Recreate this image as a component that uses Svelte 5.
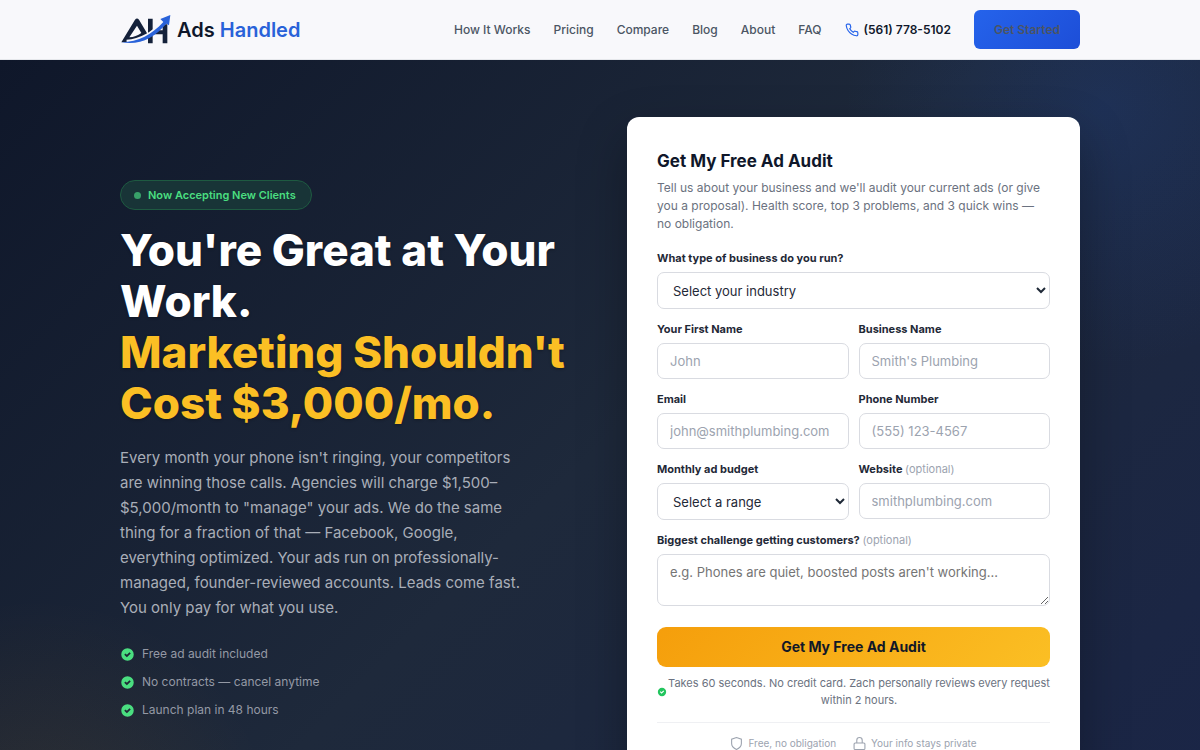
<script lang="ts">
  const links = ['How It Works', 'Pricing', 'Compare', 'Blog', 'About', 'FAQ'];
  const perks = ['Free ad audit included', 'No contracts — cancel anytime', 'Launch plan in 48 hours'];
  const industries = ['Plumbing', 'HVAC', 'Roofing', 'Electrical', 'Landscaping', 'Other'];
  const budgets = ['Under $500', '$500–$1,000', '$1,000–$3,000', '$3,000+'];

  let form = $state({ industry: '', name: '', business: '', email: '', phone: '', budget: '', website: '', challenge: '' });

  function submit(e: SubmitEvent) {
    e.preventDefault();
  }
</script>

{#snippet check(size: number)}
  <svg width={size} height={size} viewBox="0 0 24 24" aria-hidden="true">
    <path fill="currentColor" fill-rule="evenodd" d="M12 2a10 10 0 1 0 0 20 10 10 0 0 0 0-20Zm5.2 8.2-6.2 6.2-4.2-4.2 2-2 2.2 2.2 4.2-4.2 2 2Z" />
  </svg>
{/snippet}

<header>
  <div class="container bar">
    <a class="logo" href="/">
      <svg width="51" height="30" viewBox="30 44 153 90" aria-hidden="true">
        <path fill="#14213a" fill-rule="evenodd" d="M34 126 75 58q6-7 12 0l25 42-16 12-34 12Zm24-15q20-1 36-13L81 76Z" />
        <path fill="#14213a" d="M114 55h14v74h-14ZM158 72h14v57h-14v-27h-30V90h30Z" />
        <path fill="none" stroke="#f8f8fb" stroke-width="14" d="M50 125C94 122 130 101 162 65" />
        <path fill="#2962d9" d="M34 126c52-1 92-24 126-61l-9-9 30-12-4 31-8-5c-38 43-79 66-135 56Z" />
      </svg>
      <span>Ads <b>Handled</b></span>
    </a>
    <nav>
      {#each links as link}
        <a href="#{link.toLowerCase().replaceAll(' ', '-')}">{link}</a>
      {/each}
      <a class="tel" href="tel:5617785102">
        <svg width="14" height="14" viewBox="0 0 24 24" fill="none" stroke="#2563eb" stroke-width="2" stroke-linecap="round" stroke-linejoin="round" aria-hidden="true">
          <path d="M22 16.92v3a2 2 0 0 1-2.18 2 19.8 19.8 0 0 1-8.63-3.07 19.5 19.5 0 0 1-6-6A19.8 19.8 0 0 1 2.12 4.18 2 2 0 0 1 4.11 2h3a2 2 0 0 1 2 1.72c.13.96.36 1.9.7 2.81a2 2 0 0 1-.45 2.11L8.09 9.91a16 16 0 0 0 6 6l1.27-1.27a2 2 0 0 1 2.11-.45c.91.34 1.85.57 2.81.7A2 2 0 0 1 22 16.92Z" />
        </svg>
        (561) 778-5102
      </a>
      <a class="cta" href="#audit">Get Started</a>
    </nav>
  </div>
</header>

<main class="hero">
  <div class="container grid">
    <section class="pitch">
      <p class="badge"><i></i>Now Accepting New Clients</p>
      <h1>You're Great at Your Work.<br /><em>Marketing Shouldn't Cost $3,000/mo.</em></h1>
      <p class="lead">
        Every month your phone isn't ringing, your competitors are winning those calls. Agencies will charge
        $1,500–$5,000/month to "manage" your ads. We do the same thing for a fraction of that — Facebook, Google,
        everything optimized. Your ads run on professionally-managed, founder-reviewed accounts. Leads come fast.
        You only pay for what you use.
      </p>
      <ul>
        {#each perks as perk}
          <li>{@render check(15)}{perk}</li>
        {/each}
      </ul>
    </section>

    <form id="audit" class="card" onsubmit={submit}>
      <h2>Get My Free Ad Audit</h2>
      <p class="intro">
        Tell us about your business and we'll audit your current ads (or give you a proposal). Health score, top 3
        problems, and 3 quick wins — no obligation.
      </p>

      <div class="fields">
        <div class="field wide">
          <label for="industry">What type of business do you run?</label>
          <select id="industry" bind:value={form.industry}>
            <option value="">Select your industry</option>
            {#each industries as item}<option>{item}</option>{/each}
          </select>
        </div>
        <div class="field">
          <label for="name">Your First Name</label>
          <input id="name" placeholder="John" bind:value={form.name} />
        </div>
        <div class="field">
          <label for="business">Business Name</label>
          <input id="business" placeholder="Smith's Plumbing" bind:value={form.business} />
        </div>
        <div class="field">
          <label for="email">Email</label>
          <input id="email" type="email" placeholder="john@smithplumbing.com" bind:value={form.email} />
        </div>
        <div class="field">
          <label for="phone">Phone Number</label>
          <input id="phone" type="tel" placeholder="(555) 123-4567" bind:value={form.phone} />
        </div>
        <div class="field">
          <label for="budget">Monthly ad budget</label>
          <select id="budget" bind:value={form.budget}>
            <option value="">Select a range</option>
            {#each budgets as item}<option>{item}</option>{/each}
          </select>
        </div>
        <div class="field">
          <label for="website">Website <span>(optional)</span></label>
          <input id="website" placeholder="smithplumbing.com" bind:value={form.website} />
        </div>
        <div class="field wide">
          <label for="challenge">Biggest challenge getting customers? <span>(optional)</span></label>
          <textarea id="challenge" placeholder="e.g. Phones are quiet, boosted posts aren't working..." bind:value={form.challenge}></textarea>
        </div>
      </div>

      <button type="submit">Get My Free Ad Audit</button>
      <p class="note">
        {@render check(10)}
        <span>Takes 60 seconds. No credit card. Zach personally reviews every request within 2 hours.</span>
      </p>

      <div class="trust">
        <span>
          <svg width="13" height="13" viewBox="0 0 24 24" aria-hidden="true"><path d="M12 23s9-4 9-11V4l-9-3-9 3v8c0 7 9 11 9 11Z" /></svg>
          Free, no obligation
        </span>
        <span>
          <svg width="13" height="13" viewBox="0 0 24 24" aria-hidden="true"><rect x="2" y="11" width="20" height="12" rx="2" /><path d="M7 11V6a5 5 0 0 1 10 0v5" /></svg>
          Your info stays private
        </span>
      </div>
    </form>
  </div>
</main>

<style>
  :global(body) { margin: 0; background: #0f172a; }
  :global(#app) { font-family: Inter, 'Liberation Sans', sans-serif; color: #0f172a; }
  :global(*) { box-sizing: border-box; }

  h1, h2, p, ul { margin: 0; padding: 0; }
  a { color: inherit; text-decoration: none; }
  svg { flex: none; }

  .container { max-width: 1008px; margin: 0 auto; padding: 0 24px; }

  header { background: #f8f8fb; border-bottom: 1px solid #e5e7eb; }
  .bar { display: flex; align-items: center; justify-content: space-between; height: 59px; }
  .logo { display: flex; align-items: center; gap: 6px; font-size: 20px; line-height: 24px; font-weight: 600; }
  .logo b { color: #2962d9; font-weight: 600; }
  nav { display: flex; align-items: center; gap: 23px; font-size: 12px; font-weight: 500; color: #4b5563; }
  .tel { display: flex; align-items: center; gap: 5px; color: #0f172a; font-weight: 600; }
  .cta { padding: 12px 20px; border-radius: 6px; line-height: 15px; font-weight: 600; background: linear-gradient(135deg, #2563eb, #1d4ed8); }

  .hero {
    padding: 57px 0;
    background:
      radial-gradient(circle at 92% 6%, rgba(37, 99, 235, 0.14), transparent 260px),
      radial-gradient(circle at 3% 100%, rgba(245, 158, 11, 0.09), transparent 240px),
      linear-gradient(135deg, #0f172a 0%, #1e293b 50%, #1a2547 100%);
  }
  .grid { display: grid; grid-template-columns: 1fr 1fr; gap: 54px; align-items: center; }

  .pitch { display: flex; flex-direction: column; align-items: flex-start; }
  .badge { display: flex; align-items: center; gap: 7px; padding: 6px 15px 6px 13px; border: 1px solid #1e5a41; border-radius: 15px; background: #183437; color: #4ade80; font-size: 11px; line-height: 16px; font-weight: 600; }
  .badge i { width: 7px; height: 7px; border-radius: 50%; background: #38a169; }
  h1 { margin-top: 15px; color: #fff; font-size: 44px; line-height: 51px; font-weight: 800; text-shadow: 0 1px 3px rgba(0, 0, 0, 0.3); }
  h1 em { font-style: normal; color: #fbbf24; }
  .lead { max-width: 410px; margin-top: 16px; font-size: 15px; line-height: 25px; color: #a9aeb8; }
  ul { display: grid; gap: 12px; margin-top: 26px; list-style: none; }
  li { display: flex; align-items: center; gap: 7px; font-size: 12px; line-height: 16px; color: #9499a5; }
  li :global(svg) { color: #4ade80; }

  .card { padding: 30px; border-radius: 12px; background: #fff; box-shadow: 0 20px 50px rgba(0, 0, 0, 0.3); }
  h2 { font-size: 17px; line-height: 28px; font-weight: 700; }
  .intro { margin-top: 4px; font-size: 12px; line-height: 18px; color: #6b7280; }

  .fields { display: grid; grid-template-columns: 1fr 1fr; gap: 12px 10px; margin-top: 17px; }
  .field { display: flex; flex-direction: column; gap: 6px; min-width: 0; }
  .wide { grid-column: 1 / -1; }
  label { font-size: 11px; line-height: 16px; font-weight: 700; color: #1f2937; }
  label span { font-weight: 400; color: #9ca3af; }
  input, select, textarea { width: 100%; margin: 0; border: 1px solid #d9dbe1; border-radius: 7px; background: #fff; color: #1f2937; font: 13px/18px Inter, sans-serif; }
  input { height: 36px; padding: 0 12px; }
  select { height: 37px; padding: 0 11px; }
  input::placeholder { color: #9ca3af; }
  textarea { height: 52px; padding: 8px 12px; resize: vertical; }

  button { width: 100%; height: 40px; margin-top: 21px; border: 0; border-radius: 9px; background: linear-gradient(135deg, #f59e0b, #fbbf24); color: #111827; font: 700 14px/20px Inter, sans-serif; }
  .note { display: flex; align-items: center; gap: 1px; margin-top: 8px; font-size: 11px; line-height: 17px; color: #6b7280; text-align: center; }
  .note :global(svg) { color: #22c55e; }
  .trust { display: flex; justify-content: center; gap: 17px; margin-top: 13px; padding-top: 12px; border-top: 1px solid #eff0f3; font-size: 10px; line-height: 16px; color: #9ca3af; }
  .trust span { display: flex; align-items: center; gap: 5px; }
  .trust svg { fill: none; stroke: currentColor; stroke-width: 2; }
</style>
